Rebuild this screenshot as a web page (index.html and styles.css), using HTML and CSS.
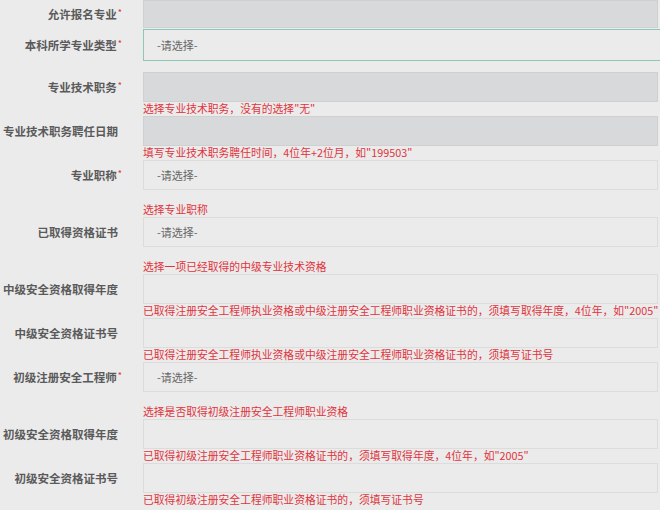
FILE: index.html
```html
<!DOCTYPE html>
<html lang="zh-CN">
<head>
<meta charset="utf-8">
<link rel="stylesheet" href="styles.css">
</head>
<body>
<div class="form">
  <div class="field first">
    <div class="label">允许报名专业<span class="req">*</span></div>
    <div class="box disabled"></div>
  </div>
  <div class="field second">
    <div class="label">本科所学专业类型<span class="req">*</span></div>
    <div class="box focus">-请选择-</div>
  </div>
  <div class="field">
    <div class="label">专业技术职务<span class="req">*</span></div>
    <div class="box disabled"></div>
    <div class="hint">选择专业技术职务，没有的选择"无"</div>
  </div>
  <div class="field">
    <div class="label">专业技术职务聘任日期</div>
    <div class="box disabled"></div>
    <div class="hint">填写专业技术职务聘任时间，4位年+2位月，如"199503"</div>
  </div>
  <div class="field">
    <div class="label">专业职称<span class="req">*</span></div>
    <div class="box">-请选择-</div>
    <div class="hint tall">选择专业职称</div>
  </div>
  <div class="field">
    <div class="label">已取得资格证书</div>
    <div class="box">-请选择-</div>
    <div class="hint tall">选择一项已经取得的中级专业技术资格</div>
  </div>
  <div class="field">
    <div class="label">中级安全资格取得年度</div>
    <div class="box"></div>
    <div class="hint">已取得注册安全工程师执业资格或中级注册安全工程师职业资格证书的，须填写取得年度，4位年，如"2005"</div>
  </div>
  <div class="field">
    <div class="label">中级安全资格证书号</div>
    <div class="box"></div>
    <div class="hint">已取得注册安全工程师执业资格或中级注册安全工程师职业资格证书的，须填写证书号</div>
  </div>
  <div class="field">
    <div class="label">初级注册安全工程师<span class="req">*</span></div>
    <div class="box">-请选择-</div>
    <div class="hint tall">选择是否取得初级注册安全工程师职业资格</div>
  </div>
  <div class="field">
    <div class="label">初级安全资格取得年度</div>
    <div class="box"></div>
    <div class="hint">已取得初级注册安全工程师职业资格证书的，须填写取得年度，4位年，如"2005"</div>
  </div>
  <div class="field">
    <div class="label">初级安全资格证书号</div>
    <div class="box"></div>
    <div class="hint">已取得初级注册安全工程师职业资格证书的，须填写证书号</div>
  </div>
</div>
</body>
</html>
```

FILE: styles.css
```css
html, body {
  margin: 0;
  padding: 0;
  background: #ebebeb;
  overflow: hidden;
}
body {
  width: 660px;
  height: 510px;
  font-family: "Noto Sans CJK SC", "Noto Sans", sans-serif;
}
.form {
  display: flex;
  flex-direction: column;
}
.field {
  display: grid;
  grid-template-columns: 143px 1fr;
  grid-template-rows: auto auto;
}
.label {
  grid-column: 1;
  grid-row: 1;
  align-self: center;
  text-align: right;
  padding-right: 25px;
  font-size: 11.5px;
  font-weight: bold;
  color: #5a5a5a;
  white-space: nowrap;
}
.req {
  color: #d9323a;
  font-size: 9px;
  font-weight: normal;
  vertical-align: 3px;
  margin-left: 1px;
  margin-right: -4px;
}
.box {
  grid-column: 2;
  grid-row: 1;
  box-sizing: border-box;
  width: 515px;
  height: 30px;
  border: 1px solid #dcdcdc;
  background: #ebebeb;
  padding-left: 13px;
  font-size: 11px;
  line-height: 28px;
  color: #666;
}
.box.disabled {
  background: #d8d9db;
  border-color: #cfd0d2;
}
.box.focus {
  width: 530px;
  height: 32px;
  line-height: 30px;
  border-color: #8ec7b6;
}
.first .box {
  height: 28px;
}
.second {
  margin-top: 1px;
  margin-bottom: 11px;
}
.hint {
  grid-column: 2;
  grid-row: 2;
  font-size: 10.8px;
  line-height: 14px;
  height: 14px;
  margin-top: -1px;
  margin-bottom: 1px;
  color: #e0343d;
  white-space: nowrap;
}
.hint.tall {
  padding-top: 13px;
  height: 14px;
  margin-bottom: 1px;
}
```
